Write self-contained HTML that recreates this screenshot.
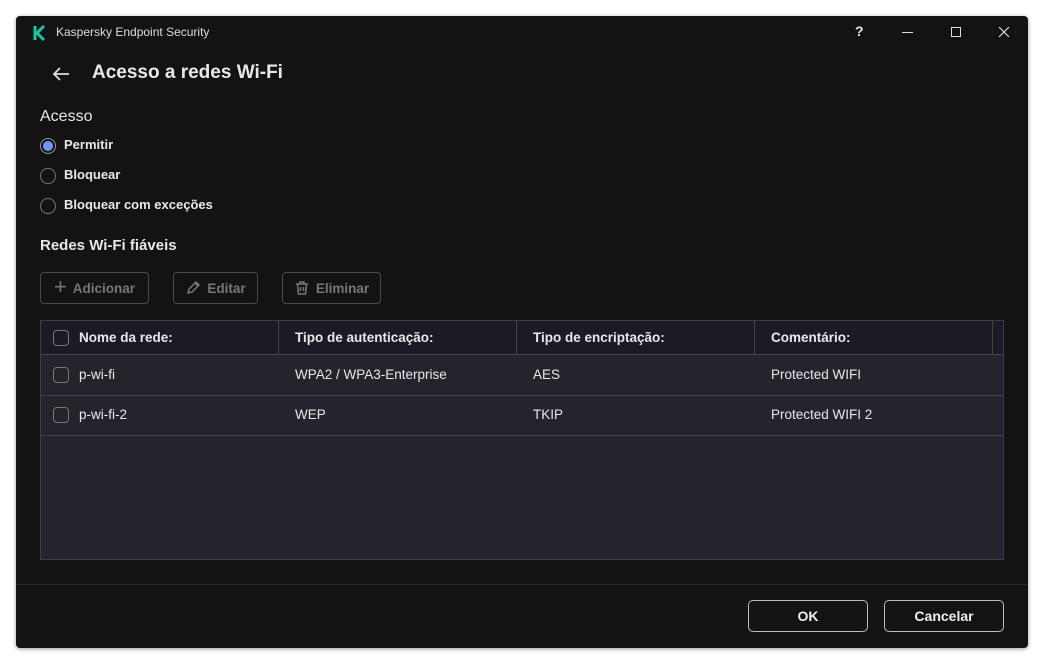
<!DOCTYPE html>
<html><head><meta charset="utf-8"><style>
*{box-sizing:border-box;margin:0;padding:0}
body{width:1044px;height:664px;background:#fff;font-family:"Liberation Sans",sans-serif;position:relative;overflow:hidden;color:#e8e8e8}
.win{position:absolute;left:16px;top:16px;width:1012px;height:632px;background:#131313;border-radius:4px;box-shadow:0 1px 4px rgba(0,0,0,.4)}
.a{position:absolute;white-space:nowrap}
.radio{position:absolute;width:16px;height:16px;border:1px solid #777;border-radius:50%}
.btn{position:absolute;border:1px solid #4a4a4a;border-radius:4px;color:#777;font-size:13.5px;font-weight:bold;display:flex;align-items:center;justify-content:center;gap:6px}
.cb{position:absolute;width:16px;height:16px;border:1.5px solid #777;border-radius:4px}
.t{font-size:13.5px}
.b2{position:absolute;border:1px solid #bbb;border-radius:5px;font-size:14px;font-weight:bold;display:flex;align-items:center;justify-content:center;color:#eee}
</style></head><body>
<div class="win">
<svg class="a" style="left:17px;top:9px" width="14" height="16"><path d="M2 1V15M11 1L4 8L11 15" stroke="#20c5a0" stroke-width="3" fill="none"/></svg>
<div class="a" style="left:40px;top:9px;font-size:12px;color:#ddd">Kaspersky Endpoint Security</div>
<div class="a" style="left:839px;top:7px;font-size:14px;font-weight:bold">?</div>
<div class="a" style="left:886px;top:16px;width:11px;height:1px;background:#ddd"></div>
<div class="a" style="left:935px;top:11px;width:10px;height:10px;border:1px solid #ddd"></div>
<svg class="a" style="left:982px;top:10px" width="12" height="12"><path d="M1 1L11 11M11 1L1 11" stroke="#ddd" stroke-width="1.2"/></svg>
<svg class="a" style="left:36px;top:50px" width="18" height="16"><path d="M2 8H17M8 2L2 8L8 14" stroke="#ddd" stroke-width="1.8" fill="none"/></svg>
<div class="a" style="left:76px;top:46px;font-size:19px;font-weight:bold">Acesso a redes Wi-Fi</div>
<div class="a" style="left:24px;top:92px;font-size:16px">Acesso</div>
<div class="radio" style="left:24px;top:122px;border-color:#999"><div style="position:absolute;left:2px;top:2px;width:10px;height:10px;border-radius:50%;background:#6f9bff"></div></div>
<div class="a" style="left:48px;top:121px;font-weight:bold;font-size:13px">Permitir</div>
<div class="radio" style="left:24px;top:152px"></div>
<div class="a" style="left:48px;top:151px;font-weight:bold;font-size:13px">Bloquear</div>
<div class="radio" style="left:24px;top:182px"></div>
<div class="a" style="left:48px;top:181px;font-weight:bold;font-size:13px">Bloquear com exceções</div>
<div class="a" style="left:24px;top:221px;font-size:15px;font-weight:bold">Redes Wi-Fi fiáveis</div>
<div class="btn" style="left:24px;top:256px;width:109px;height:32px"><span style="font-size:22px;font-weight:normal;margin-top:-3px">+</span>Adicionar</div>
<div class="btn" style="left:157px;top:256px;width:85px;height:32px"><svg width="16" height="16"><path d="M3 13L4 9L11 2L14 5L7 12Z M10 3L13 6" stroke="#777" stroke-width="1.5" fill="none"/></svg>Editar</div>
<div class="btn" style="left:266px;top:256px;width:99px;height:32px"><svg width="16" height="16"><path d="M2 4H14M6 4V2H10V4M3.5 4L4.5 14H11.5L12.5 4M6.5 7V11M9.5 7V11" stroke="#777" stroke-width="1.5" fill="none"/></svg>Eliminar</div>
<div class="a" style="left:24px;top:304px;width:964px;height:240px;background:#25242d;border:1px solid #3c3c44">
 <div class="a" style="left:0;top:0;width:962px;height:34px;background:#1b1b25;border-bottom:1px solid #44444c"></div>
 <div class="a" style="left:237px;top:0;width:1px;height:34px;background:#44444c"></div>
 <div class="a" style="left:475px;top:0;width:1px;height:34px;background:#44444c"></div>
 <div class="a" style="left:713px;top:0;width:1px;height:34px;background:#44444c"></div>
 <div class="a" style="left:951px;top:0;width:1px;height:34px;background:#44444c"></div>
 <div class="a" style="left:0;top:74px;width:962px;height:1px;background:#44444c"></div>
 <div class="a" style="left:0;top:114px;width:962px;height:1px;background:#44444c"></div>
 <div class="cb" style="left:12px;top:9px"></div>
 <div class="a t" style="left:38px;top:9px;font-weight:bold">Nome da rede:</div>
 <div class="a t" style="left:254px;top:9px;font-weight:bold">Tipo de autenticação:</div>
 <div class="a t" style="left:492px;top:9px;font-weight:bold">Tipo de encriptação:</div>
 <div class="a t" style="left:730px;top:9px;font-weight:bold">Comentário:</div>
 <div class="cb" style="left:12px;top:46px"></div>
 <div class="a t" style="left:38px;top:46px">p-wi-fi</div>
 <div class="a t" style="left:254px;top:46px">WPA2 / WPA3-Enterprise</div>
 <div class="a t" style="left:492px;top:46px">AES</div>
 <div class="a t" style="left:730px;top:46px">Protected WIFI</div>
 <div class="cb" style="left:12px;top:86px"></div>
 <div class="a t" style="left:38px;top:86px">p-wi-fi-2</div>
 <div class="a t" style="left:254px;top:86px">WEP</div>
 <div class="a t" style="left:492px;top:86px">TKIP</div>
 <div class="a t" style="left:730px;top:86px">Protected WIFI 2</div>
</div>
<div class="a" style="left:0;top:568px;width:1012px;height:1px;background:#2a2a2a"></div>
<div class="b2" style="left:732px;top:584px;width:120px;height:32px">OK</div>
<div class="b2" style="left:868px;top:584px;width:120px;height:32px">Cancelar</div>
</div>
</body></html>
